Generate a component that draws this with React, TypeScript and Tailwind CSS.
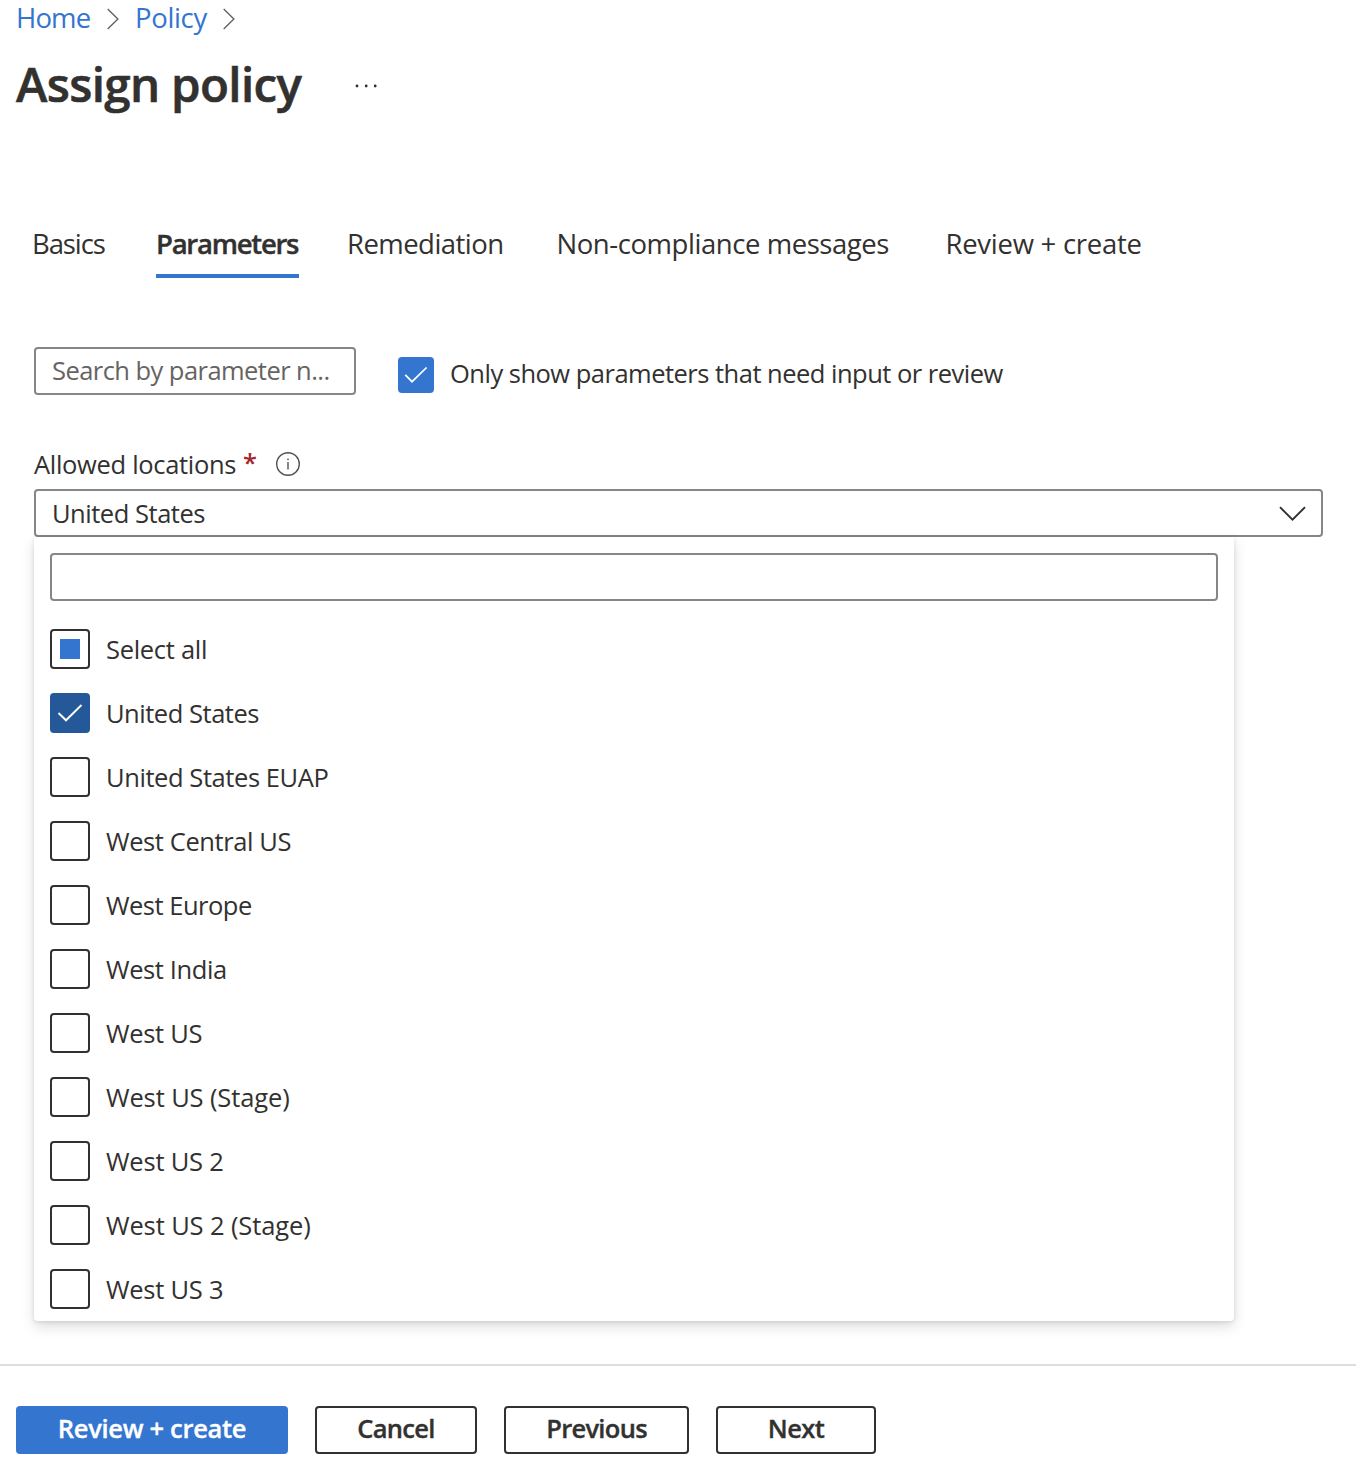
const tabs = [
  { label: "Basics", cls: "ml-8 w-[124px] tracking-[-1.1px]" },
  { label: "Parameters", active: true, cls: "w-[191px] font-semibold tracking-[-1.25px] [-webkit-text-stroke:0.4px]" },
  { label: "Remediation", cls: "w-[209.5px] tracking-[-0.55px]" },
  { label: "Non-compliance messages", cls: "w-[389px] tracking-[-0.44px]" },
  { label: "Review + create", cls: "tracking-[-0.27px]" },
];

type State = "on" | "off" | "mixed";

const options: { label: string; state: State; cls: string }[] = [
  { label: "Select all", state: "mixed", cls: "tracking-[-0.3px]" },
  { label: "United States", state: "on", cls: "tracking-[-0.47px]" },
  { label: "United States EUAP", state: "off", cls: "tracking-[-0.42px]" },
  { label: "West Central US", state: "off", cls: "tracking-[-0.4px]" },
  { label: "West Europe", state: "off", cls: "tracking-[-0.5px]" },
  { label: "West India", state: "off", cls: "tracking-[-0.4px]" },
  { label: "West US", state: "off", cls: "tracking-[-0.3px]" },
  { label: "West US (Stage)", state: "off", cls: "tracking-[-0.12px]" },
  { label: "West US 2", state: "off", cls: "tracking-[-0.2px]" },
  { label: "West US 2 (Stage)", state: "off", cls: "tracking-[-0.12px]" },
  { label: "West US 3", state: "off", cls: "tracking-[-0.25px]" },
];

function Crumb() {
  return (
    <svg width="12" height="22" viewBox="0 0 12 22" fill="none" stroke="#605e5c" strokeWidth="1.3">
      <path d="M0.7 1L10.9 11L0.7 21" />
    </svg>
  );
}

function Box({ state }: { state: State }) {
  if (state === "on") {
    return (
      <span className="size-10 shrink-0 rounded-[4px] bg-[#255898]">
        <svg width="40" height="40" viewBox="0 0 40 40" fill="none" stroke="#fff" strokeWidth="1.9">
          <path d="M8.5 20L16 27.3L31.5 12" />
        </svg>
      </span>
    );
  }
  return (
    <span className="flex size-10 shrink-0 items-center justify-center rounded-[4px] border-2 border-[#323130] bg-white">
      {state === "mixed" && <span className="size-5 bg-[#3375cf]" />}
    </span>
  );
}

export default function App() {
  return (
    <div className="flex h-[1482px] w-[1356px] flex-col overflow-hidden bg-white font-['Open_Sans','Noto_Sans',sans-serif] text-[25.5px] whitespace-nowrap text-[#323130]">
      <nav className="flex h-9 items-center pl-4 text-[27.5px] leading-9 text-[#3375cf]">
        <a className="w-[91px] tracking-[-0.85px]">Home</a>
        <span className="mt-0.5 w-7"><Crumb /></span>
        <a className="w-[88px] tracking-[-0.35px]">Policy</a>
        <span className="mt-0.5"><Crumb /></span>
      </nav>

      <header className="mt-4 flex h-16 items-center pl-4">
        <h1 className="w-[339px] text-[47.5px] leading-[64px] font-semibold tracking-[-0.66px] [-webkit-text-stroke:0.6px]">Assign policy</h1>
        <svg className="mt-1" width="24" height="6" viewBox="0 0 24 6" fill="#323130">
          <circle cx="2" cy="3" r="1.4" />
          <circle cx="11.2" cy="3" r="1.4" />
          <circle cx="20.2" cy="3" r="1.4" />
        </svg>
      </header>

      <div className="mt-[109px] flex h-[53px] text-[27.5px] leading-[38px]">
        {tabs.map((t) => (
          <div key={t.label} className={t.cls}>
            {t.label}
            {t.active && <div className="mt-[11px] h-1 w-[143px] bg-[#3375cf]" />}
          </div>
        ))}
      </div>

      <div className="mt-[69px] flex h-12 pl-[34px]">
        <div className="flex h-12 w-[322px] items-center rounded-[4px] border-2 border-[#868686] pb-0.5 pl-4 tracking-[-0.55px] text-[#666462]">
          Search by parameter n...
        </div>
        <span className="mt-2.5 ml-[42px] size-9 rounded-[4px] bg-[#3375cf]">
          <svg width="36" height="36" viewBox="0 0 36 36" fill="none" stroke="#fff" strokeWidth="1.7">
            <path d="M7.3 17.8L14 24.7L28.6 10.5" />
          </svg>
        </span>
        <span className="mt-[3px] ml-4 leading-[46px] tracking-[-0.51px]">
          Only show parameters that need input or review
        </span>
      </div>

      <div className="mt-[51px] flex h-9 items-center pl-[34px] leading-9">
        <span className="w-[209px] tracking-[-0.31px]">Allowed locations</span>
        <span className="w-[32px] pb-1 font-semibold text-[#a4262c]">*</span>
        <svg width="26" height="26" viewBox="0 0 26 26" fill="none" stroke="#55534f" strokeWidth="1.4">
          <circle cx="13" cy="13" r="11.3" />
          <path d="M13 11V18.6" />
          <circle cx="13" cy="8.3" r="0.9" fill="#55534f" stroke="none" />
        </svg>
      </div>

      <div className="mt-[7px] ml-[34px] flex h-12 w-[1289px] shrink-0 items-center justify-between rounded-[4px] border-2 border-[#868686] pr-[15.5px] pl-4">
        <span className="tracking-[-0.47px]">United States</span>
        <svg className="mt-0.5" width="27" height="16" viewBox="0 0 27 16" fill="none" stroke="#323130" strokeWidth="1.9">
          <path d="M1 1.2L13.5 13.7L26 1.2" />
        </svg>
      </div>

      <div className="ml-[34px] flex w-[1200px] shrink-0 flex-col rounded-b-[4px] bg-white px-4 pt-4 shadow-[0_6px_14px_rgba(0,0,0,0.13),0_1px_4px_rgba(0,0,0,0.11)]">
        <div className="mb-4 h-12 rounded-[4px] border-2 border-[#868686]" />
        {options.map((o) => (
          <div key={o.label} className="flex h-16 items-center gap-4">
            <Box state={o.state} />
            <span className={o.cls}>{o.label}</span>
          </div>
        ))}
      </div>

      <footer className="mt-[43px] flex grow items-start gap-[27px] border-t-2 border-[#dedddc] pt-10 pl-4 font-semibold [-webkit-text-stroke:0.35px]">
        <button className="h-12 w-[272px] rounded-[4px] bg-[#3375cf] pb-1 tracking-[-0.3px] text-white">Review + create</button>
        <button className="h-12 w-[162px] rounded-[4px] border-2 border-[#323130] pb-1 tracking-[-0.7px]">Cancel</button>
        <button className="h-12 w-[185px] rounded-[4px] border-2 border-[#323130] pb-1 tracking-[-0.7px]">Previous</button>
        <button className="h-12 w-[160px] rounded-[4px] border-2 border-[#323130] pb-1 tracking-[-0.6px]">Next</button>
      </footer>
    </div>
  );
}
